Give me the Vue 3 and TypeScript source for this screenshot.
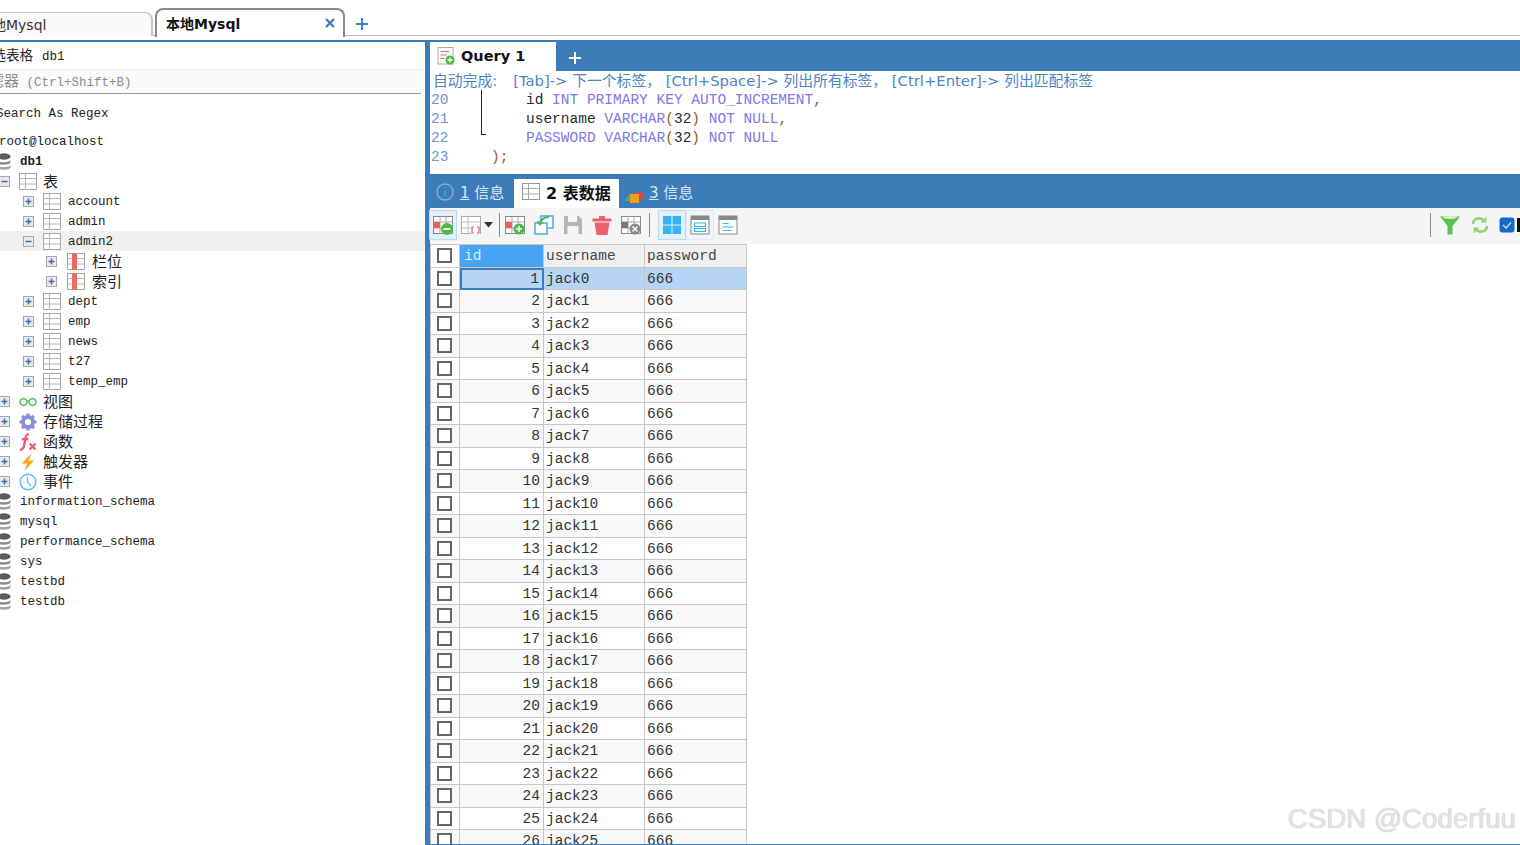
<script setup lang="ts">
interface TreeRow {
  label: string
  level: 'root' | 'db' | 'l0' | 'l1' | 'l2'
  icon: string
  expander?: 'plus' | 'minus'
  active?: boolean
  big?: boolean
  bold?: boolean
}

const tree: TreeRow[] = [
  { label: 'root@localhost', level: 'root', icon: '' },
  { label: 'db1', level: 'db', icon: 'db', bold: true },
  { label: '表', level: 'l0', icon: 'table', expander: 'minus', big: true },
  { label: 'account', level: 'l1', icon: 'table', expander: 'plus' },
  { label: 'admin', level: 'l1', icon: 'table', expander: 'plus' },
  { label: 'admin2', level: 'l1', icon: 'table', expander: 'minus', active: true },
  { label: '栏位', level: 'l2', icon: 'cols', expander: 'plus', big: true },
  { label: '索引', level: 'l2', icon: 'cols', expander: 'plus', big: true },
  { label: 'dept', level: 'l1', icon: 'table', expander: 'plus' },
  { label: 'emp', level: 'l1', icon: 'table', expander: 'plus' },
  { label: 'news', level: 'l1', icon: 'table', expander: 'plus' },
  { label: 't27', level: 'l1', icon: 'table', expander: 'plus' },
  { label: 'temp_emp', level: 'l1', icon: 'table', expander: 'plus' },
  { label: '视图', level: 'l0', icon: 'view', expander: 'plus', big: true },
  { label: '存储过程', level: 'l0', icon: 'gear', expander: 'plus', big: true },
  { label: '函数', level: 'l0', icon: 'fx', expander: 'plus', big: true },
  { label: '触发器', level: 'l0', icon: 'bolt', expander: 'plus', big: true },
  { label: '事件', level: 'l0', icon: 'clock', expander: 'plus', big: true },
  { label: 'information_schema', level: 'db', icon: 'db' },
  { label: 'mysql', level: 'db', icon: 'db' },
  { label: 'performance_schema', level: 'db', icon: 'db' },
  { label: 'sys', level: 'db', icon: 'db' },
  { label: 'testbd', level: 'db', icon: 'db' },
  { label: 'testdb', level: 'db', icon: 'db' },
]

const rows = Array.from({ length: 26 }, (_, i) => ({
  id: i + 1,
  username: `jack${i}`,
  password: '666',
}))
</script>

<template>
  <div class="app">
    <header class="top">
      <div class="tab inactive"><span class="tab-clip">本地Mysql</span></div>
      <div class="tab current">
        <span>本地Mysql</span>
        <svg class="tab-x" width="12" height="12" viewBox="0 0 12 12"><path d="M2 2l8 8M10 2l-8 8" stroke="#3c7cb8" stroke-width="2.4" /></svg>
      </div>
      <svg class="tab-plus" width="14" height="14" viewBox="0 0 14 14"><path d="M7 1v12M1 7h12" stroke="#3c7cb8" stroke-width="2" /></svg>
    </header>

    <div class="body">
      <aside class="side">
        <div class="side-title"><span class="cjk">筛选表格</span> db1</div>
        <div class="filter"><span class="cjk">过滤器</span> (Ctrl+Shift+B)</div>
        <div class="regex">Search As Regex</div>
        <div class="tree">
          <div v-for="r in tree" :key="r.label" class="node" :class="[r.level, { active: r.active }]">
            <span v-if="r.expander" class="exp">
              <svg width="11" height="11" viewBox="0 0 11 11">
                <rect x="0.5" y="0.5" width="10" height="10" fill="#e8eaee" stroke="#a8a8a8" />
                <path d="M2.5 5.5h6" stroke="#3c6cb0" stroke-width="1.5" />
                <path v-if="r.expander === 'plus'" d="M5.5 2.500v6" stroke="#3c6cb0" stroke-width="1.5" />
              </svg>
            </span>
            <svg v-if="r.icon === 'db'" class="ico" width="14" height="18" viewBox="0 0 14 18">
              <ellipse cx="7" cy="3.500" rx="6.500" ry="3.200" fill="#5c5c5c" />
              <path d="M0.500 7c1 3 12 3 13 0v2.600c-1 3-12 3-13 0z" fill="#8c8c8c" />
              <path d="M0.500 11.800c1 3 12 3 13 0v2.600c-1 3-12 3-13 0z" fill="#a4a4a4" />
            </svg>
            <svg v-else-if="r.icon === 'table'" class="ico" width="18" height="18" viewBox="0 0 18 18">
              <rect x="0.500" y="0.500" width="17" height="16" fill="#fff" stroke="#a6a6a6" />
              <path d="M0.500 5.500h17M0.500 11h17M6.500 0.500v16" stroke="#b4b4b4" />
            </svg>
            <svg v-else-if="r.icon === 'cols'" class="ico" width="18" height="18" viewBox="0 0 18 18">
              <rect x="0.500" y="0.500" width="17" height="16" fill="#fff" stroke="#a6a6a6" />
              <path d="M0.500 5.500h17M0.500 11h17" stroke="#b4b4b4" />
              <rect x="5" y="0.500" width="5" height="16" fill="#ee6a5e" />
            </svg>
            <svg v-else-if="r.icon === 'view'" class="ico" width="18" height="18" viewBox="0 0 18 18">
              <circle cx="4.500" cy="9" r="3.400" fill="none" stroke="#62c96a" stroke-width="1.800" />
              <circle cx="13.500" cy="9" r="3.400" fill="none" stroke="#62c96a" stroke-width="1.800" />
              <path d="M8 8h2" stroke="#62c96a" stroke-width="1.400" />
            </svg>
            <svg v-else-if="r.icon === 'gear'" class="ico" width="18" height="18" viewBox="0 0 18 18">
              <circle cx="9" cy="9" r="5" fill="none" stroke="#8a8fdc" stroke-width="3.800" />
              <path d="M9 0.500v3M9 14.500v3M0.500 9h3M14.500 9h3M3 3l2.200 2.200M12.800 12.800L15 15M15 3l-2.200 2.200M5.200 12.800L3 15" stroke="#8a8fdc" stroke-width="3.200" />
            </svg>
            <svg v-else-if="r.icon === 'fx'" class="ico" width="18" height="18" viewBox="0 0 18 18">
              <path d="M10 1.500C7.500 1 7 2.500 6.500 5L5 13C4.600 15.500 3 17 1 16.300M2.800 6.200h6.500" fill="none" stroke="#ef5a72" stroke-width="2.400" />
              <path d="M10.500 10.500l6 6M16.500 10.500l-6 6" stroke="#ef5a72" stroke-width="2.200" />
            </svg>
            <svg v-else-if="r.icon === 'bolt'" class="ico" width="18" height="18" viewBox="0 0 18 18">
              <path d="M13 0L2.500 10.500h5.500L5.500 18 15 7.500H9.500z" fill="#f6a623" />
            </svg>
            <svg v-else-if="r.icon === 'clock'" class="ico" width="18" height="18" viewBox="0 0 18 18">
              <circle cx="9" cy="9" r="7.800" fill="#fff" stroke="#55c1f5" stroke-width="1.500" />
              <path d="M8.500 4v5l3.500 4" fill="none" stroke="#55c1f5" stroke-width="1.300" />
            </svg>
            <span class="label" :class="{ big: r.big, bold: r.bold }">{{ r.label }}</span>
          </div>
        </div>
      </aside>

      <main class="main">
        <div class="qbar">
          <div class="qtab">
            <svg width="18" height="18" viewBox="0 0 18 18">
              <rect x="1" y="0.500" width="15" height="16.500" fill="#fff" stroke="#aaa" />
              <path d="M3.500 4.500h9M3.500 8h6M3.500 11.500h4" stroke="#e8675a" stroke-width="1.200" />
              <circle cx="13" cy="13" r="4.500" fill="#4fb948" />
              <path d="M10.500 13h5M13 10.500v5" stroke="#fff" stroke-width="1.300" />
            </svg>
            <span>Query 1</span>
          </div>
          <svg class="qplus" width="14" height="14" viewBox="0 0 14 14"><path d="M7 1v12M1 7h12" stroke="#fff" stroke-width="2" /></svg>
        </div>

        <div class="editor">
          <div class="auto">
            <span>自动完成:</span>
            <span class="auto-keys">[Tab]-&gt; 下一个标签， [Ctrl+Space]-&gt; 列出所有标签， [Ctrl+Enter]-&gt; 列出匹配标签</span>
          </div>
          <div class="line">
            <span class="num">20</span><span class="fold"></span>
            <span class="code ind"><span class="d">id</span> <span class="k">INT PRIMARY KEY AUTO_INCREMENT</span><span class="p">,</span></span>
          </div>
          <div class="line">
            <span class="num">21</span><span class="fold"></span>
            <span class="code ind"><span class="d">username</span> <span class="k">VARCHAR</span><span class="p">(</span><span class="d">32</span><span class="p">)</span> <span class="k">NOT NULL</span><span class="p">,</span></span>
          </div>
          <div class="line">
            <span class="num">22</span><span class="fold end"></span>
            <span class="code ind"><span class="k">PASSWORD VARCHAR</span><span class="p">(</span><span class="d">32</span><span class="p">)</span> <span class="k">NOT NULL</span></span>
          </div>
          <div class="line">
            <span class="num">23</span><span class="nofold"></span>
            <span class="code close"><span class="p">);</span></span>
          </div>
        </div>

        <div class="rbar">
          <div class="rtab">
            <svg width="18" height="18" viewBox="0 0 18 18">
              <circle cx="9" cy="9" r="8" fill="none" stroke="#8fa8c4" stroke-width="1.500" />
              <path d="M9 7.500v6M9 4v1.800" stroke="#2f9be8" stroke-width="2.200" />
            </svg>
            <span><u>1</u> 信息</span>
          </div>
          <div class="rtab on">
            <svg width="18" height="18" viewBox="0 0 18 18">
              <rect x="0.500" y="0.500" width="17" height="16" fill="#fff" stroke="#999" />
              <path d="M0.500 5.500h17M0.500 11h17M6.500 0.500v16" stroke="#aaa" />
            </svg>
            <span>2 表数据</span>
          </div>
          <div class="rtab third">
            <svg class="shapes" width="19" height="18" viewBox="0 0 19 18">
              <circle cx="14" cy="11" r="4.500" fill="#e0453c" />
              <path d="M0 16l5-8 5 8z" fill="#52b04e" />
              <rect x="5" y="9" width="9" height="9" fill="#f59a23" />
            </svg>
            <span class="third-label"><u>3</u> 信息</span>
          </div>
        </div>

        <div class="toolbar">
          <button class="tb pressed">
            <svg width="24" height="24" viewBox="0 0 24 24">
              <rect x="2.500" y="3.500" width="19" height="17" fill="#fff" stroke="#888" />
              <path d="M2.500 9h19M2.500 15h19M9 3.500v17M15 3.500v17" stroke="#aaa" />
              <rect x="3" y="9" width="6" height="6" fill="#ec5f5f" />
              <circle cx="16" cy="16" r="6" fill="#4fb948" />
              <path d="M12.500 16h7" stroke="#fff" stroke-width="2" />
            </svg>
          </button>
          <button class="tb wide">
            <svg width="24" height="24" viewBox="0 0 24 24">
              <rect x="2.500" y="3.500" width="19" height="17" fill="#fff" stroke="#aaa" />
              <path d="M2.500 9h19M2.500 15h19M9 3.500v17" stroke="#bbb" />
              <rect x="12" y="13" width="9" height="8" fill="#fff" />
              <path d="M15 14h-2v6h2M18 14h2v6h-2" fill="none" stroke="#ec5f5f" stroke-width="1.200" />
            </svg>
            <svg width="9" height="6" viewBox="0 0 9 6"><path d="M0 0h9L4.500 5.500z" fill="#333" /></svg>
          </button>
          <span class="sep s1"></span>
          <button class="tb">
            <svg width="24" height="24" viewBox="0 0 24 24">
              <rect x="2.500" y="3.500" width="19" height="17" fill="#fff" stroke="#888" />
              <path d="M2.500 9h19M2.500 15h19M9 3.500v17M15 3.500v17" stroke="#aaa" />
              <rect x="3" y="9" width="6" height="6" fill="#ec5f5f" />
              <circle cx="16" cy="16" r="5.500" fill="#4fb948" />
              <path d="M13 16h6M16 13v6" stroke="#fff" stroke-width="1.600" />
            </svg>
          </button>
          <button class="tb">
            <svg width="24" height="24" viewBox="0 0 24 24">
              <rect x="9" y="3" width="12" height="12" fill="#fff" stroke="#4aa8e8" stroke-width="1.500" />
              <rect x="3" y="10" width="12" height="11" fill="#fff" stroke="#4aa8e8" stroke-width="1.500" />
              <path d="M8 11c1-5 5-7 9-7" fill="none" stroke="#4fb948" stroke-width="2" />
              <path d="M4.500 8l3.500 5 3.500-4z" fill="#4fb948" />
            </svg>
          </button>
          <button class="tb">
            <svg width="24" height="24" viewBox="0 0 24 24">
              <path d="M3 3h15l3 3v15H3z" fill="#b5b5b5" />
              <rect x="7" y="3" width="9" height="6" fill="#f5f5f5" />
              <rect x="6.500" y="13" width="11" height="8" fill="#f5f5f5" />
            </svg>
          </button>
          <button class="tb">
            <svg width="24" height="24" viewBox="0 0 24 24">
              <path d="M2.500 5.500h19v3h-19zM9 5.500V3h6v2.500" fill="#ee5f72" />
              <path d="M4.500 9.500h15l-2 12.500h-11z" fill="#ee5f72" />
            </svg>
          </button>
          <button class="tb">
            <svg width="24" height="24" viewBox="0 0 24 24">
              <rect x="2.500" y="3.500" width="19" height="17" fill="#fff" stroke="#888" />
              <path d="M2.500 9h19M2.500 15h19M9 3.500v17M15 3.500v17" stroke="#aaa" />
              <rect x="3" y="9" width="6" height="6" fill="#777" />
              <circle cx="16" cy="16" r="5.500" fill="#8a8a8a" />
              <path d="M13.500 13.500l5 5M18.500 13.500l-5 5" stroke="#fff" stroke-width="1.400" />
            </svg>
          </button>
          <span class="sep s2"></span>
          <button class="tb pressed">
            <svg width="24" height="24" viewBox="0 0 24 24">
              <path d="M3 3h8.500v8.500H3zM12.500 3H21v8.500h-8.500zM3 12.500h8.500V21H3zM12.500 12.500H21V21h-8.500z" fill="#35b4f5" />
            </svg>
          </button>
          <button class="tb lightp">
            <svg width="24" height="24" viewBox="0 0 24 24">
              <rect x="3" y="3" width="18" height="18" fill="#fff" stroke="#888" />
              <rect x="3" y="3" width="18" height="4" fill="#888" />
              <rect x="6.500" y="10" width="11" height="3.500" fill="none" stroke="#35b4f5" />
              <rect x="6.500" y="15.500" width="11" height="3" fill="none" stroke="#35b4f5" />
            </svg>
          </button>
          <button class="tb">
            <svg width="24" height="24" viewBox="0 0 24 24">
              <rect x="3" y="3" width="18" height="18" fill="#fff" stroke="#888" />
              <rect x="3" y="3" width="18" height="4" fill="#888" />
              <path d="M6.500 10.500h6M6.500 14h11M6.500 17.500h9" stroke="#35b4f5" stroke-width="1.200" />
            </svg>
          </button>
          <span class="spacer"></span>
          <span class="sep s3"></span>
          <svg class="tool-r" width="22" height="22" viewBox="0 0 22 22">
            <path d="M1 2.500h20L13.500 12v8.500h-5V12z" fill="#5cc04e" />
            <ellipse cx="11" cy="3.500" rx="7" ry="1.500" fill="#d8f2d2" />
          </svg>
          <svg class="tool-r" width="20" height="20" viewBox="0 0 20 20">
            <path d="M3 9c0-4 4-7 9-5l2 1.500M17 11c0 4-4 7-9 5l-2-1.500" fill="none" stroke="#8ed27a" stroke-width="2.600" />
            <path d="M16.500 1.500v6h-6zM3.500 18.500v-6h6z" fill="#8ed27a" />
          </svg>
          <svg class="tool-c" width="16" height="16" viewBox="0 0 16 16">
            <rect x="0.500" y="0.500" width="15" height="15" rx="3" fill="#1668c4" />
            <path d="M4 8l3 3 5-5.500" fill="none" stroke="#cfe4fa" stroke-width="1.300" />
          </svg>
          <span class="black-bit"></span>
        </div>

        <div class="grid-wrap">
          <div class="grid">
            <div class="cell head check"><span class="box"></span></div>
            <div class="cell head idhead">id</div>
            <div class="cell head">username</div>
            <div class="cell head">password</div>
            <template v-for="(r, i) in rows" :key="r.id">
              <div class="cell check" :class="{ alt: i % 2 === 1 }"><span class="box"></span></div>
              <div class="cell num-cell" :class="{ selcur: i === 0, alt: i % 2 === 1 }">{{ r.id }}</div>
              <div class="cell" :class="{ sel: i === 0, alt: i % 2 === 1 }">{{ r.username }}</div>
              <div class="cell" :class="{ sel: i === 0, alt: i % 2 === 1 }">{{ r.password }}</div>
            </template>
          </div>
        </div>
      </main>
    </div>
    <div class="mark">CSDN @Coderfuu</div>
  </div>
</template>

<style>
html, body { margin: 0; background: #fff; }
</style>

<style scoped>
.app {
  width: 1520px;
  height: 845px;
  overflow: hidden;
  display: flex;
  flex-direction: column;
  position: relative;
  background: #fff;
  color: #222;
  font-family: "Liberation Mono", "Noto Sans CJK SC", monospace;
}
.cjk { font-family: "Noto Sans CJK SC", "Noto Sans", sans-serif; }
.tab, .auto, .rtab, .qtab { font-family: "DejaVu Sans", "Noto Sans CJK SC", sans-serif; }

.top {
  height: 40px;
  box-sizing: border-box;
  flex: none;
  display: flex;
  align-items: flex-start;
  background: linear-gradient(#fff 35px, #b9b9b9 35px, #b9b9b9 36px, #fff 36px);
}
.tab {
  box-sizing: border-box;
  font-size: 14px;
  display: flex;
  align-items: center;
  overflow: hidden;
  border: 1px solid #c4c4c4;
  border-bottom: 0;
  padding-bottom: 2px;
}
.inactive {
  width: 153px;
  height: 24px;
  margin-top: 12px;
  border-left: 0;
  border-radius: 0 8px 0 0;
  color: #333;
  background: #fafafa;
  border-right: 2px solid #c4c4c4;
}
.tab-clip { margin-left: -22px; white-space: nowrap; }
.current {
  width: 190px;
  height: 29px;
  margin: 8px 0 0 2px;
  padding: 0 7px 2px 9px;
  justify-content: space-between;
  font-weight: 700;
  color: #111;
  background: #fff;
  border: 2px solid #8a8a8a;
  border-bottom: 0;
  border-radius: 8px 8px 0 0;
}
.tab-plus { margin: 17px 0 0 10px; }

.body {
  flex: 1;
  min-height: 0;
  display: flex;
  border-top: 2px solid #3c7cb8;
}
.side {
  width: 425px;
  flex: none;
  overflow: hidden;
  font-size: 12.500px;
  border-right: 5px solid #3c7cb8;
}
.side-title {
  height: 28px;
  line-height: 25px;
  margin-left: -21px;
  border-bottom: 1px solid #eee;
  box-sizing: border-box;
  white-space: nowrap;
}
.side-title .cjk { font-size: 13.500px; margin-right: 1.500px; }
.filter {
  height: 24px;
  line-height: 20px;
  box-sizing: border-box;
  width: 421px;
  text-indent: -26px;
  color: #8b8b8b;
  background: #fafafa;
  border-bottom: 1px solid #999;
  overflow: hidden;
  white-space: nowrap;
}
.filter .cjk { font-size: 15px; }
.regex {
  height: 37px;
  line-height: 40px;
  margin-left: -4px;
  white-space: nowrap;
}
.node {
  height: 20px;
  display: flex;
  align-items: center;
  white-space: nowrap;
}
.node.active { background: #f0f0f0; }
.exp { width: 11px; height: 11px; flex: none; display: flex; margin-top: 1px; }
.ico { flex: none; margin-top: 1px; }
.label { padding-top: 3px; line-height: 17px; }
.label.big { padding-top: 0; padding-bottom: 2px; }
.root { margin-left: -1px; }
.db { margin-left: -3px; }
.db .ico { margin-right: 9px; }
.l0 .exp { margin-left: -1px; margin-right: 9px; }
.l0 .ico { margin-right: 6px; }
.l1 .exp { margin-left: 23px; margin-right: 9px; }
.l1 .ico { margin-right: 7px; }
.l2 .exp { margin-left: 46px; margin-right: 10px; }
.l2 .ico { margin-right: 7px; }
.big { font-family: "Noto Sans CJK SC", sans-serif; font-size: 15px; }
.bold { font-weight: 700; }

.main {
  flex: 1;
  min-width: 0;
  display: flex;
  flex-direction: column;
  border-bottom: 1px solid #3c7cb8;
}
.qbar {
  height: 29px;
  flex: none;
  background: #3c7cb8;
  display: flex;
  align-items: center;
}
.qtab {
  width: 126px;
  height: 29px;
  box-sizing: border-box;
  background: #fff;
  display: flex;
  align-items: center;
  gap: 6px;
  padding-left: 7px;
  padding-bottom: 1px;
  font-size: 14.500px;
  font-weight: 700;
  color: #111;
}
.qplus { margin-left: 12px; margin-top: 2px; }

.editor { height: 103px; flex: none; box-sizing: border-box; }
.auto {
  height: 19px;
  line-height: 19px;
  font-size: 14.800px;
  color: #4a84c4;
  padding-left: 3px;
  white-space: nowrap;
  overflow: hidden;
}
.auto-keys { margin-left: 16px; }
.line {
  height: 19px;
  display: flex;
  font-size: 14.500px;
  line-height: 20px;
  white-space: pre;
}
.num { width: 51px; padding-left: 1px; box-sizing: border-box; color: #6c93d2; flex: none; }
.fold { width: 1px; background: #222; flex: none; }
.fold.end {
  height: 7px;
  width: 5px;
  background: transparent;
  border-left: 1.500px solid #222;
  border-bottom: 1.500px solid #222;
  box-sizing: border-box;
}
.nofold { width: 1px; flex: none; }
.code.ind { margin-left: 44px; }
.fold.end + .code.ind { margin-left: 40px; }
.code.close { margin-left: 9px; }
.d { color: #2a2a2a; }
.k { color: #8078e8; }
.p { color: #9a5a20; }

.rbar {
  height: 34px;
  flex: none;
  background: #3c7cb8;
  display: flex;
  align-items: flex-end;
  padding-left: 6px;
  box-sizing: border-box;
}
.rtab {
  height: 29px;
  box-sizing: border-box;
  padding-bottom: 4px;
  display: flex;
  align-items: center;
  gap: 6px;
  font-size: 15px;
  color: #d8e6f4;
  width: 78px;
}
.rtab.on {
  width: 105px;
  margin-right: 6px;
  padding-left: 8px;
  background: #fff;
  color: #111;
  font-weight: 700;
  font-size: 16px;
}
.shapes { margin-top: 4px; }
.third-label { margin-left: -1px; }

.toolbar {
  height: 36px;
  flex: none;
  box-sizing: border-box;
  background: #f5f5f5;
  display: flex;
  align-items: center;
  padding-bottom: 2px;
}
.tb {
  width: 28px;
  height: 30px;
  padding: 0;
  margin: 0 0.500px;
  border: 1px solid transparent;
  background: transparent;
  display: flex;
  align-items: center;
  justify-content: center;
  flex: none;
}
.tb:first-child { margin-left: -1px; }
.tb.wide { width: 36px; gap: 1px; margin-left: 0; }
.tb.pressed { background: #e2f0fb; border-color: #bcd9f0; }
.tb.lightp { background: #eef5fb; border-color: #dfeaf4; }
.tb.lightp, .tb.lightp + .tb { margin-left: -0.500px; }
.sep { width: 1px; height: 24px; background: #888; flex: none; }
.s1 { margin: 0 0 0 5px; }
.s2 { margin: 0 7px 0 4px; }
.s3 { margin: 0 8px 0 0; }
.spacer { flex: 1; }
.tool-r { margin-right: 9px; flex: none; }
.tool-c { flex: none; }
.black-bit { width: 3px; height: 14px; background: #111; margin-left: 2px; flex: none; }

.grid-wrap { flex: 1; min-height: 0; overflow: hidden; }
.grid {
  display: grid;
  grid-template-columns: 30px 84px 101px 102px;
  grid-auto-rows: 22.500px;
  width: 317px;
  font-size: 14.500px;
  border-top: 1px solid #c6c6c6;
}
.cell {
  box-sizing: border-box;
  border-right: 1px solid #c6c6c6;
  border-bottom: 1px solid #c6c6c6;
  line-height: 22px;
  padding: 0 2px;
  white-space: nowrap;
  overflow: hidden;
  color: #333;
  background: #fff;
}
.cell.alt { background: #f8f8f8; }
.head { background: #f0f0f0; color: #444; }
.idhead { background: #47a3f3; color: #dcecfb; padding-left: 4px; }
.check {
  display: flex;
  align-items: center;
  justify-content: center;
  background: #fff;
  border-left: 1px solid #c6c6c6;
  padding: 0 2px 0 0;
}
.box { width: 15px; height: 15px; box-sizing: border-box; border: 2.500px solid #666; background: #fff; flex: none; }
.num-cell { text-align: right; padding-right: 3px; }
.sel { background: #b6d5f4; }
.selcur { background: #b6d5f4; border: 2px solid #3c7cb8; line-height: 18.500px; }

.mark {
  position: absolute;
  right: 4px;
  bottom: 9px;
  font-family: "Liberation Sans", sans-serif;
  font-size: 27.700px;
  line-height: 34px;
  color: #e4e4e4;
  text-shadow: 0 0 1px #aaa;
}
</style>
